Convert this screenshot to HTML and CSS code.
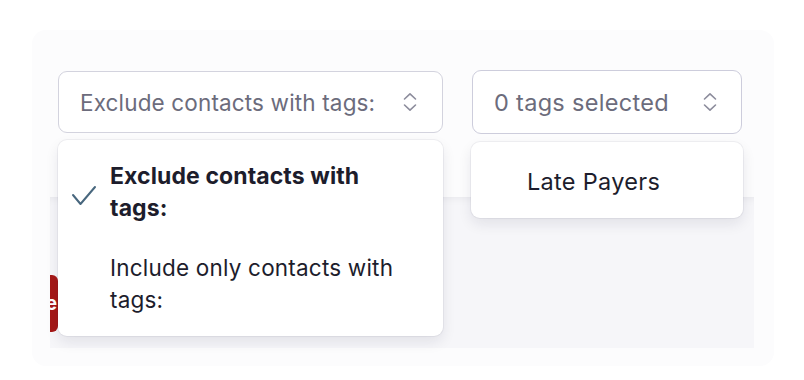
FILE: index.html
```html
<!DOCTYPE html>
<html lang="en">
<head>
<meta charset="utf-8">
<title>Tag filter</title>
<link rel="stylesheet" href="styles.css">
</head>
<body>
<div class="panel">
  <div class="header">
    <div class="field field-mode">
      <div class="select select-mode">
        <span class="select-text">Exclude contacts with tags:</span>
        <svg class="chevrons" width="14" height="20" viewBox="0 0 14 20"><path d="M1.5 7 L7 1.8 L12.5 7" /><path d="M1.5 13 L7 18.2 L12.5 13" /></svg>
      </div>
      <div class="menu menu-mode">
        <div class="option option-selected">
          <svg class="check" width="26" height="22" viewBox="0 0 26 22"><path d="M2 10 L9.5 19 L24 2" /></svg>
          <span>Exclude contacts with tags:</span>
        </div>
        <div class="option">
          <span>Include only contacts with tags:</span>
        </div>
      </div>
    </div>
    <div class="field field-tags">
      <div class="select select-tags">
        <span class="select-text">0 tags selected</span>
        <svg class="chevrons" width="14" height="20" viewBox="0 0 14 20"><path d="M1.5 7 L7 1.8 L12.5 7" /><path d="M1.5 13 L7 18.2 L12.5 13" /></svg>
      </div>
      <div class="menu menu-tags">
        <div class="option option-tag"><span>Late Payers</span></div>
      </div>
    </div>
  </div>
  <div class="body-area">
    <button class="danger-btn">Delete</button>
  </div>
</div>
</body>
</html>
```
FILE: styles.css
```css
* { box-sizing: border-box; }
html, body { margin: 0; background: #ffffff; }
body {
  padding: 30px 0 0 32px;
  font-family: Inter, "Noto Sans", sans-serif;
  -webkit-font-smoothing: antialiased;
}
.panel {
  width: 742px;
  height: 336px;
  background: #fcfcfd;
  border-radius: 14px;
  padding: 0 20px 18px 18px;
  display: flex;
  flex-direction: column;
}
.header {
  height: 167px;
  padding: 40px 0 0 8px;
  display: flex;
  align-items: flex-start;
  gap: 29px;
  position: relative;
  z-index: 2;
}
.field { position: relative; }
.field-mode { width: 385px; }
.field-tags { width: 270px; }
.select {
  display: flex;
  align-items: center;
  justify-content: space-between;
  background: #ffffff;
  border: 1.5px solid #d3d3de;
  border-radius: 9px;
  padding: 0 25px 0 21px;
}
.select-mode { height: 62px; margin-top: 1px; }
.select-tags { height: 64px; border-color: #cdcddc; padding-right: 24px; }
.select-text {
  font-size: 22.5px;
  color: #6c6c7c;
  letter-spacing: 0.15px;
}
.select-tags .select-text { font-size: 23.5px; letter-spacing: 0.3px; }
.chevrons { fill: none; stroke: #8c8c9c; stroke-width: 1.6; stroke-linecap: round; stroke-linejoin: round; }
.menu {
  position: absolute;
  left: 0;
  right: 0;
  background: #ffffff;
  border-radius: 9px;
  box-shadow: 0 0 0 1px rgba(20, 20, 50, 0.05), 0 6px 14px rgba(20, 20, 50, 0.09);
  padding: 6px 0;
}
.menu-mode { top: 70px; }
.menu-tags { top: 72px; left: -1px; right: -1px; }
.option {
  position: relative;
  padding: 14px 40px 14px 52px;
  font-size: 22.5px;
  line-height: 32px;
  color: #1d1d2c;
  letter-spacing: 0.2px;
}
.option-selected { font-weight: 700; font-size: 23px; letter-spacing: 0.1px; }
.option-tag { padding: 18px 20px 14px 56px; font-size: 23.5px; letter-spacing: 0.3px; }
.check {
  position: absolute;
  left: 13px;
  top: 39px;
  fill: none;
  stroke: #48677e;
  stroke-width: 2;
  stroke-linecap: round;
  stroke-linejoin: round;
}
.body-area {
  flex: 1;
  background: #f6f6f9;
  box-shadow: inset 0 8px 10px -8px rgba(20, 20, 50, 0.08);
  overflow: hidden;
  position: relative;
  z-index: 1;
}
.danger-btn {
  display: block;
  margin: 78px 0 0 -62px;
  width: 70px;
  height: 57px;
  border: 0;
  border-radius: 6px;
  background: #a51817;
  color: #ffffff;
  font-family: Inter, "Noto Sans", sans-serif;
  font-weight: 700;
  font-size: 19px;
  text-align: right;
  padding: 0 1px 0 0;
}
```
